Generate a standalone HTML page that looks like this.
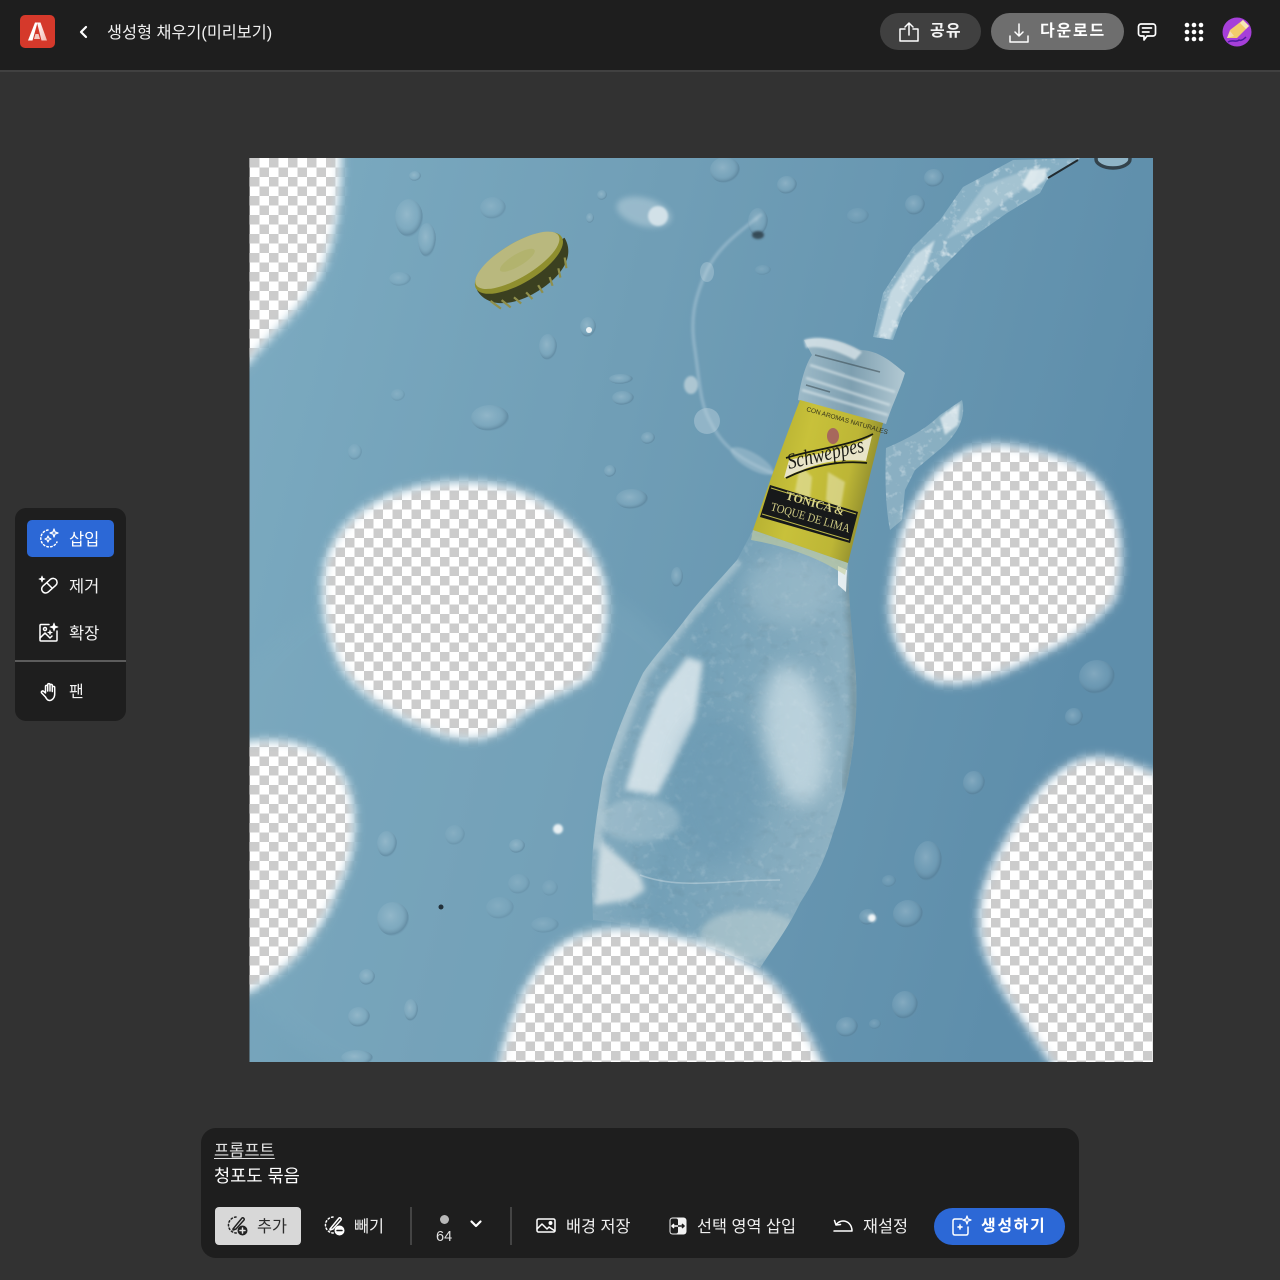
<!DOCTYPE html>
<html lang="ko">
<head>
<meta charset="utf-8">
<title>생성형 채우기(미리보기)</title>
<style>
html,body{margin:0;padding:0;width:1280px;height:1280px;overflow:hidden;background:#323232}
body{position:relative;font-family:"Liberation Sans","Noto Sans CJK KR",sans-serif;color:#f2f2f2}
.a{position:absolute;white-space:nowrap}
.t{position:absolute;white-space:nowrap;line-height:20px;font-size:15px}
svg.i{position:absolute;fill:none;stroke:#fff;stroke-width:1.5;stroke-linecap:round;stroke-linejoin:round;overflow:visible}
</style>
</head>
<body>

<svg class="a" style="left:0;top:0" width="1280" height="1280" viewBox="0 0 1280 1280">
<defs>
<pattern id="ck" x="250" y="158" width="19" height="19" patternUnits="userSpaceOnUse">
<rect width="19" height="19" fill="#fff"/><rect width="9.5" height="9.5" fill="#ccc"/><rect x="9.5" y="9.5" width="9.5" height="9.5" fill="#ccc"/>
</pattern>
<linearGradient id="bg" x1="0" y1="0" x2="1" y2="0.25">
<stop offset="0" stop-color="#7cabc1"/><stop offset=".45" stop-color="#709eb6"/><stop offset="1" stop-color="#5e8eab"/>
</linearGradient>
<filter id="b6" x="-20%" y="-20%" width="140%" height="140%"><feGaussianBlur stdDeviation="5"/></filter>
<filter id="b3" x="-30%" y="-30%" width="160%" height="160%"><feGaussianBlur stdDeviation="3"/></filter>
<filter id="b8" x="-50%" y="-50%" width="200%" height="200%"><feGaussianBlur stdDeviation="9"/></filter>
<filter id="b1" x="-30%" y="-30%" width="160%" height="160%"><feGaussianBlur stdDeviation="1"/></filter>
<filter id="tex" x="0" y="0" width="100%" height="100%">
<feTurbulence type="fractalNoise" baseFrequency=".12" numOctaves="3" seed="7"/>
<feColorMatrix values="0 0 0 0 1  0 0 0 0 1  0 0 0 0 1  2.6 0 0 0 -1.45"/>
<feComposite in2="SourceGraphic" operator="in"/>
</filter>
<filter id="tex2" x="0" y="0" width="100%" height="100%">
<feTurbulence type="fractalNoise" baseFrequency=".07 .1" numOctaves="3" seed="3"/>
<feColorMatrix values="0 0 0 0 .1  0 0 0 0 .18  0 0 0 0 .22  3 0 0 0 -1.75"/>
<feComposite in2="SourceGraphic" operator="in"/>
</filter>
<radialGradient id="dr" cx=".42" cy=".4" r=".62">
<stop offset="0" stop-color="#cfe0e8" stop-opacity=".32"/><stop offset=".6" stop-color="#9dbfd0" stop-opacity=".22"/><stop offset=".88" stop-color="#4f7289" stop-opacity=".42"/><stop offset="1" stop-color="#6e9ab2" stop-opacity=".08"/>
</radialGradient>
<linearGradient id="gl" x1="0" y1="0" x2="1" y2=".25">
<stop offset="0" stop-color="#93b5c6"/><stop offset=".45" stop-color="#73a0b7"/><stop offset="1" stop-color="#8fb2c3"/>
</linearGradient>
<linearGradient id="lb" x1="0" y1="0" x2="1" y2=".3">
<stop offset="0" stop-color="#a9a42c"/><stop offset=".45" stop-color="#c8c13a"/><stop offset=".8" stop-color="#bdb636"/><stop offset="1" stop-color="#8d8a2d"/>
</linearGradient>
<linearGradient id="nk" x1="0" y1="0" x2="1" y2="0">
<stop offset="0" stop-color="#9dbac8"/><stop offset=".5" stop-color="#7e9fb0"/><stop offset="1" stop-color="#b2c9d3"/>
</linearGradient>
<linearGradient id="adl" x1="0" y1="0" x2="1" y2="1"><stop offset="0" stop-color="#fff"/><stop offset="1" stop-color="#f3b9b0"/></linearGradient>
<clipPath id="img"><rect x="249.5" y="158" width="903.5" height="904"/></clipPath>
<clipPath id="str"><path d="M873,337 L883,293 L913,247 L940,220 L963,187 L1013,160 L1080,158 L1047,180 L1040,193 L1007,213 L973,237 L950,260 L923,287 L903,313 L893,340 Z"/></clipPath>
<clipPath id="bot"><path d="M753,530 L737,560 C715,585 700,600 687,617 C670,640 655,655 643,673 C625,710 612,745 603,777 C595,825 590,860 592,893 L593,920 C650,925 710,945 760,968 C775,945 790,925 800,903 C815,880 825,860 833,833 C845,800 852,765 855,727 C858,695 856,670 853,643 C851,620 849,600 848,563 Z"/></clipPath>
<mask id="holes" maskUnits="userSpaceOnUse" x="240" y="150" width="925" height="920">
<rect x="240" y="150" width="925" height="920" fill="#fff"/>
<g fill="#000" filter="url(#b6)">
<path id="h1" d="M230,140 L341,140 C343,190 338,240 318,280 C300,312 275,330 249,362 L230,380 Z"/>
<path id="h2" d="M322,590 C322,545 345,515 385,497 C420,482 465,476 510,487 C555,500 590,535 603,575 C613,610 605,650 590,678 C565,695 540,700 515,722 C490,745 455,745 415,725 C385,712 345,685 335,655 C325,630 322,610 322,590 Z"/>
<path id="h3" d="M889,600 C893,560 900,520 925,485 C945,455 975,440 1010,445 C1040,450 1085,458 1105,490 C1125,525 1125,570 1115,600 C1095,625 1065,645 1040,655 C1005,675 965,690 935,682 C905,672 888,640 889,600 Z"/>
<path id="h4" d="M230,745 C270,735 320,738 343,775 C360,805 358,850 340,885 C325,925 300,965 250,992 L230,1000 Z"/>
<path id="h5" d="M495,1080 C505,1030 520,985 548,955 C575,925 630,922 680,937 C720,945 760,965 780,990 C800,1015 815,1045 830,1080 Z"/>
<path id="h6" d="M1175,780 C1145,770 1115,752 1085,758 C1050,768 1025,805 1005,840 C985,875 973,905 982,945 C995,990 1030,1030 1062,1080 L1175,1080 Z"/>
</g>
</mask>
</defs>

<rect width="1280" height="1280" fill="#323232"/>
<g clip-path="url(#img)">
<rect x="249" y="158" width="905" height="905" fill="url(#ck)"/>
<g fill="none" stroke="#fff" stroke-width="7" opacity=".8" filter="url(#b3)">
<use href="#h1"/><use href="#h2"/><use href="#h3"/><use href="#h4"/><use href="#h5"/><use href="#h6"/>
</g>
<g mask="url(#holes)">
<rect x="249" y="158" width="905" height="905" fill="url(#bg)"/>
<ellipse cx="470" cy="830" rx="280" ry="270" fill="#7eaabf" opacity=".35" filter="url(#b8)"/>

<!-- thin splash -->
<path d="M762,214 C735,235 715,250 705,275 C694,300 690,320 695,350 C700,385 700,405 712,425 C725,450 745,462 775,474" fill="none" stroke="#c5dae4" stroke-width="3.5" stroke-opacity=".34" filter="url(#b1)"/>
<ellipse cx="758" cy="222" rx="10" ry="14" fill="url(#dr)"/><ellipse cx="758" cy="235" rx="6" ry="4" fill="#27343c" opacity=".75" filter="url(#b1)"/>
<ellipse cx="707" cy="272" rx="7" ry="10" fill="#c6d9e2" opacity=".35"/>
<ellipse cx="707" cy="421" rx="13" ry="13" fill="#bdd3de" opacity=".45"/>
<ellipse cx="691" cy="385" rx="7" ry="9" fill="#cfdde2" opacity=".65" filter="url(#b1)"/>
<ellipse cx="752" cy="461" rx="24" ry="8" transform="rotate(30 752 461)" fill="#b9d0db" opacity=".4" filter="url(#b1)"/>

<!-- stream -->
<path d="M873,337 L883,293 L913,247 L940,220 L963,187 L1013,160 L1080,158 L1047,180 L1040,193 L1007,213 L973,237 L950,260 L923,287 L903,313 L893,340 Z" fill="#9dc0d0" opacity=".62"/>
<g clip-path="url(#str)">
<rect x="870" y="155" width="215" height="190" fill="#fff" filter="url(#tex)" opacity=".7"/>
<path d="M878,335 L890,292 L915,255 L935,240 L925,270 L905,300 L890,340Z" fill="#eef5f7" opacity=".6" filter="url(#b1)"/>
<path d="M945,240 L985,185 L1040,165 L1035,180 L1000,205 L965,230Z" fill="#cfe0e7" opacity=".4" filter="url(#b1)"/>
</g>
<path d="M1030,170 L1047,168 L1045,180 L1030,192 L1022,185Z" fill="#e6eff2" opacity=".85" filter="url(#b1)"/>
<path d="M1048,178 L1078,160" stroke="#222b30" stroke-width="2" fill="none"/>
<ellipse cx="1113" cy="159" rx="17" ry="9" fill="#8fb4c6" stroke="#33434c" stroke-width="3.5"/>

<!-- right splash -->
<path d="M886,448 C905,440 925,430 940,415 L962,400 C966,415 960,430 945,445 L915,470 L905,490 L902,520 L890,530 C885,505 885,475 886,448 Z" fill="#bdd3dc" opacity=".42"/>
<path d="M886,448 C905,440 925,430 940,415 L962,400 C966,415 960,430 945,445 L915,470 L905,490 L902,520 L890,530 C885,505 885,475 886,448 Z" fill="#fff" filter="url(#tex)" opacity=".55"/>
<path d="M940,418 L960,403 L958,425 L945,435 Z" fill="#eef4f6" opacity=".7" filter="url(#b1)"/>

<!-- bottle body -->
<g clip-path="url(#bot)">
<rect x="580" y="525" width="290" height="455" fill="url(#gl)"/>
<rect x="580" y="525" width="290" height="455" fill="#fff" filter="url(#tex)" opacity=".16"/>
<rect x="580" y="525" width="290" height="455" fill="#000" filter="url(#tex2)" opacity=".14"/>
<path d="M687,657 L703,662 L695,720 L672,767 L657,795 L625,790 L640,740 L660,693 Z" fill="#e6eff2" opacity=".78" filter="url(#b3)"/>
<ellipse cx="795" cy="735" rx="32" ry="70" transform="rotate(-8 795 735)" fill="#d6e5eb" opacity=".65" filter="url(#b8)"/>
<ellipse cx="720" cy="790" rx="45" ry="75" fill="#6c9ab3" opacity=".6" filter="url(#b8)"/>
<ellipse cx="790" cy="590" rx="45" ry="35" fill="#a9c5d1" opacity=".45" filter="url(#b8)"/>
<path d="M600,840 L640,875 L645,890 L630,900 L595,905 Z" fill="#e7eeef" opacity=".72" filter="url(#b3)"/>
<path d="M640,875 C680,890 720,880 780,880" fill="none" stroke="#dbe7eb" stroke-width="1.5" opacity=".4"/>
<ellipse cx="640" cy="820" rx="40" ry="22" fill="#cfdfe4" opacity=".3" filter="url(#b3)"/>
<ellipse cx="750" cy="935" rx="50" ry="25" fill="#bfd1d4" opacity=".55" filter="url(#b3)"/>
<path d="M737,560 L687,617 L643,673 L603,777 L595,850" fill="none" stroke="#c8d9df" stroke-width="12" opacity=".5" filter="url(#b3)"/>
<path d="M848,575 L853,643 L855,727 L845,790" fill="none" stroke="#5a7379" stroke-width="7" opacity=".45" filter="url(#b3)"/>
<path d="M838,566 L847,570 L846,592 L838,585 Z" fill="#eef4f6" opacity=".9"/>
</g>

<!-- neck -->
<path d="M804,340 C830,335 850,345 860,350 C880,350 895,365 905,373 C900,390 892,405 886,424 L798,400 C800,385 805,365 812,355 Z" fill="url(#nk)"/>
<path d="M804,340 C815,335 840,338 862,352 L855,360 C835,350 820,345 806,348 Z" fill="#dfe9ed" opacity=".75" filter="url(#b1)"/>
<path d="M810,365 L895,392 M806,378 L890,405 M802,390 L888,415" stroke="#e2ecef" stroke-width="2.5" opacity=".6" fill="none" filter="url(#b1)"/>
<path d="M815,355 L880,372 M806,385 L830,392" stroke="#2f3d44" stroke-width="1.5" opacity=".5" fill="none"/>

<!-- label -->
<path d="M800,400 L883,423 L848,563 L753,530 C760,510 775,465 800,400 Z" fill="url(#lb)"/>
<path d="M800,465 L812,477 L810,499 L795,492Z M828,472 L845,482 L840,512 L826,500Z" fill="#e8e6b8" opacity=".55" filter="url(#b1)"/>
<path d="M789,460 C810,455 850,450 872,436 L866,461 C840,458 815,462 784,478 Z" fill="#e8e4c8"/>
<path d="M786,458 C810,450 850,446 873,434" stroke="#181a10" stroke-width="1.8" fill="none"/>
<path d="M786,478 C810,466 840,460 867,463" stroke="#181a10" stroke-width="1.8" fill="none"/>
<ellipse cx="833" cy="436" rx="6" ry="8" fill="#a7685c"/>
<text x="789" y="469" font-family="'Liberation Serif',serif" font-style="italic" font-size="22" fill="#1b1c16" transform="rotate(-13 789 469)" textLength="78" lengthAdjust="spacingAndGlyphs">Schweppes</text>
<text x="806" y="411" font-family="'Liberation Sans',sans-serif" font-size="6.5" fill="#33321a" transform="rotate(16 806 411)">CON AROMAS NATURALES</text>
<path d="M770,485 L858,512 L850,543 L760,517 Z" fill="#17191a"/>
<path d="M771,488 L856,514 M762,514 L849,540" stroke="#bdb84a" stroke-width="1"/>
<text x="785" y="499" font-family="'Liberation Serif',serif" font-weight="bold" font-size="12" fill="#d9d48a" transform="rotate(16 785 499)">TÓNICA &amp;</text>
<text x="770" y="510" font-family="'Liberation Serif',serif" font-size="12" fill="#cfcb84" transform="rotate(16 770 510)" textLength="82" lengthAdjust="spacingAndGlyphs">TOQUE DE LIMA</text>
<path d="M753,530 L848,563 L845,575 C815,555 780,545 751,540 Z" fill="#c6cf9e" opacity=".6"/>

<!-- cap -->
<g transform="rotate(-31 522 268)">
<path d="M472,264 C472,282 490,296 522,296 C554,296 574,284 574,264 Z" fill="#3b4020"/>
<path d="M478,280 l5,12 M488,285 l4,11 M500,289 l3,9 M513,291 l2,9 M527,291 l0,9 M541,290 l-2,9 M553,287 l-3,9 M564,281 l-4,10" stroke="#8f8f4c" stroke-width="2.2"/>
<ellipse cx="522" cy="262" rx="50" ry="20" fill="#8f8f2e"/>
<ellipse cx="522" cy="259" rx="48" ry="17" fill="#b9b87e"/>
<ellipse cx="522" cy="259" rx="20" ry="6" fill="#b0b16a" opacity=".8"/>
</g>

<!-- drops -->
<g fill="url(#dr)">
<ellipse cx="409" cy="218" rx="14" ry="19"/><ellipse cx="427" cy="240" rx="9" ry="17"/>
<ellipse cx="493" cy="208" rx="13" ry="11" opacity=".7"/><ellipse cx="400" cy="279" rx="11" ry="7" opacity=".7"/>
<ellipse cx="787" cy="185" rx="10" ry="9"/><ellipse cx="725" cy="170" rx="15" ry="13"/>
<ellipse cx="934" cy="178" rx="10" ry="9"/><ellipse cx="915" cy="205" rx="10" ry="10"/>
<ellipse cx="548" cy="347" rx="9" ry="13"/><ellipse cx="588" cy="327" rx="8" ry="10"/>
<ellipse cx="621" cy="379" rx="12" ry="5"/><ellipse cx="623" cy="398" rx="11" ry="7"/>
<ellipse cx="490" cy="418" rx="19" ry="13"/><ellipse cx="648" cy="438" rx="7" ry="6"/>
<ellipse cx="610" cy="471" rx="6" ry="6"/><ellipse cx="632" cy="499" rx="16" ry="10"/>
<ellipse cx="677" cy="577" rx="6" ry="10"/><ellipse cx="398" cy="395" rx="7" ry="6" opacity=".6"/>
<ellipse cx="355" cy="452" rx="7" ry="8" opacity=".7"/>
<ellipse cx="1097" cy="677" rx="18" ry="17"/><ellipse cx="1074" cy="717" rx="9" ry="9"/>
<ellipse cx="974" cy="783" rx="11" ry="12"/><ellipse cx="928" cy="861" rx="14" ry="20"/>
<ellipse cx="908" cy="914" rx="15" ry="14"/><ellipse cx="868" cy="917" rx="9" ry="8"/>
<ellipse cx="889" cy="881" rx="7" ry="6" opacity=".7"/>
<ellipse cx="387" cy="844" rx="10" ry="13"/><ellipse cx="393" cy="919" rx="16" ry="17"/>
<ellipse cx="455" cy="835" rx="10" ry="10" opacity=".6"/><ellipse cx="517" cy="846" rx="8" ry="7"/>
<ellipse cx="519" cy="884" rx="11" ry="10" opacity=".6"/><ellipse cx="545" cy="925" rx="14" ry="8" opacity=".6"/>
<ellipse cx="500" cy="908" rx="14" ry="11" opacity=".55"/><ellipse cx="550" cy="888" rx="8" ry="8" opacity=".5"/>
<ellipse cx="367" cy="977" rx="8" ry="8"/><ellipse cx="359" cy="1017" rx="11" ry="10"/>
<ellipse cx="411" cy="1010" rx="7" ry="11"/><ellipse cx="905" cy="1005" rx="13" ry="14"/>
<ellipse cx="847" cy="1027" rx="11" ry="10"/><ellipse cx="357" cy="1058" rx="16" ry="8"/>
<ellipse cx="875" cy="1024" rx="6" ry="5" opacity=".7"/><ellipse cx="763" cy="270" rx="8" ry="5" opacity=".6"/>
<ellipse cx="858" cy="216" rx="11" ry="8" opacity=".6"/><ellipse cx="602" cy="195" rx="5" ry="5"/>
<ellipse cx="590" cy="218" rx="4" ry="5"/><ellipse cx="415" cy="176" rx="6" ry="5"/>
</g>
<ellipse cx="644" cy="212" rx="28" ry="14" transform="rotate(15 644 212)" fill="#b8d0dc" opacity=".55" filter="url(#b3)"/>
<ellipse cx="658" cy="216" rx="10" ry="10" fill="#e6eff3" opacity=".75" filter="url(#b1)"/>
<circle cx="558" cy="829" r="5" fill="#e8f0f3" filter="url(#b1)"/>
<circle cx="872" cy="918" r="4" fill="#f1f6f8" filter="url(#b1)"/>
<circle cx="441" cy="907" r="2.5" fill="#22303a"/><circle cx="589" cy="330" r="3" fill="#e9f1f4"/>
</g>
</g>
</svg>

<!-- header -->
<div class="a" style="left:0;top:0;width:1280px;height:70px;background:#1e1e1e;border-bottom:2px solid #414141"></div>
<div class="a" style="left:20px;top:15px;width:35px;height:33px;border-radius:5px;background:#d5392b"></div>
<svg class="a" style="left:27px;top:21px" width="21" height="21" viewBox="0 0 21 21"><path d="M8,1.5 L10.5,1.5 L5.5,19.5 L1,19.5 Z" fill="#fff"/><path d="M10,1.5 L13.5,1.5 L20,19.5 L14.5,19.5 Z" fill="url(#adl)"/><path d="M8.5,13 L11.5,13 L13,18 L7,18 Z" fill="#f4c5be"/></svg>
<svg class="i" style="left:78px;top:25px;stroke-width:2.2" width="12" height="14" viewBox="0 0 12 14"><path d="M8,2 L3,7 L8,12"/></svg>
<div class="t" style="left:107px;top:22px;font-size:16.3px;line-height:22px;color:#f0f0f0">생성형 채우기(미리보기)</div>

<div class="a" style="left:880px;top:13px;width:101px;height:37px;border-radius:19px;background:#404040"></div>
<svg class="i" style="left:898px;top:21px" width="22" height="22" viewBox="0 0 22 22"><path d="M7,8 H2 V20 H20 V8 H15"/><path d="M11,14 V2 M7,6 L11,2 L15,6"/></svg>
<div class="t" style="left:930px;top:22px;font-size:16px;font-weight:700;letter-spacing:1.2px;color:#f4f4f4">공유</div>

<div class="a" style="left:991px;top:13px;width:133px;height:37px;border-radius:19px;background:#6e6e6e"></div>
<svg class="i" style="left:1008px;top:22px" width="22" height="22" viewBox="0 0 22 22"><path d="M2,14 V20 H20 V14"/><path d="M11,2 V14 M7,10 L11,14 L15,10"/></svg>
<div class="t" style="left:1040px;top:22px;font-size:16px;font-weight:700;letter-spacing:1.8px;color:#fff">다운로드</div>

<svg class="i" style="left:1137px;top:22px;stroke-width:1.7" width="20" height="20" viewBox="0 0 20 20"><path d="M4,2 H16 A2.5,2.5 0 0 1 18.5,4.5 V11.5 A2.5,2.5 0 0 1 16,14 H10 L7,18 V14 H4 A2.5,2.5 0 0 1 1.5,11.5 V4.5 A2.5,2.5 0 0 1 4,2Z"/><path d="M5.5,6 H14.5 M5.5,10 H12"/></svg>
<svg class="a" style="left:1184px;top:22px" width="20" height="20" viewBox="0 0 20 20" fill="#fff"><circle cx="3" cy="3" r="2.3"/><circle cx="10" cy="3" r="2.3"/><circle cx="17" cy="3" r="2.3"/><circle cx="3" cy="10" r="2.3"/><circle cx="10" cy="10" r="2.3"/><circle cx="17" cy="10" r="2.3"/><circle cx="3" cy="17" r="2.3"/><circle cx="10" cy="17" r="2.3"/><circle cx="17" cy="17" r="2.3"/></svg>
<svg class="a" style="left:1222px;top:17px" width="30" height="30" viewBox="0 0 30 30"><circle cx="15" cy="15" r="14.5" fill="#a63fd9"/><path d="M5,21 L8,13 L21,3 L27,9 L15,21 Z" fill="#f2cd6b"/><path d="M21,3 L27,9 L24,12 L18,6Z" fill="#f6e7b8"/><path d="M5,21 L8,14 L12,19 Z" fill="#f5ddb0"/><path d="M6,25 C11,22 14,26 17,23 C19,24 21,23 24,20" fill="none" stroke="#4b1aa0" stroke-width="1.5"/></svg>

<!-- left toolbar -->
<div class="a" style="left:15px;top:508px;width:111px;height:213px;border-radius:11px;background:#1e1e1e"></div>
<div class="a" style="left:27px;top:520px;width:87px;height:37px;border-radius:5px;background:#2c68d6"></div>
<div class="a" style="left:15px;top:660px;width:111px;height:2px;background:#5c5c5c"></div>

<svg class="i" style="left:39px;top:528px;stroke-width:1.5" width="22" height="22" viewBox="0 0 22 22"><path d="M9,2 A8.5,8.5 0 1 0 18,14" stroke-dasharray="1.5 2.3"/><path d="M15,1 L16,4 L19,5 L16,6 L15,9 L14,6 L11,5 L14,4Z" stroke-width="1.2"/><path d="M9,8 L9.8,10 L12,11 L9.8,12 L9,14 L8.2,12 L6,11 L8.2,10Z" stroke-width="1.2"/></svg>
<div class="t" style="left:69px;top:530px;font-size:16.5px;color:#fff">삽입</div>

<svg class="i" style="left:39px;top:575px;stroke-width:1.5" width="20" height="20" viewBox="0 0 20 20"><rect x="1.5" y="7" width="18" height="8" rx="4" transform="rotate(-42 10 11)"/><path d="M8,8 L13,13"/><path d="M3,1 L3.8,3.2 L6,4 L3.8,4.8 L3,7 L2.2,4.8 L0,4 L2.2,3.2Z" fill="#fff" stroke-width=".8"/></svg>
<div class="t" style="left:69px;top:577px;font-size:16.5px;color:#f2f2f2">제거</div>

<svg class="i" style="left:39px;top:622px;stroke-width:1.5" width="21" height="21" viewBox="0 0 21 21"><path d="M10,2.5 H2 Q1,2.5 1,3.500 V18 Q1,19 2,19 H17 Q18,19 18,18 V9"/><path d="M1,16 L6,11 L11,16 L13,14"/><circle cx="6" cy="7" r="1.5"/><path d="M15,1 L16,4 L19,5 L16,6 L15,9 L14,6 L11,5 L14,4Z" fill="#fff" stroke-width=".8"/><path d="M11,8 L11.7,9.8 L13.5,10.5 L11.7,11.2 L11,13 L10.3,11.2 L8.5,10.5 L10.3,9.8Z" fill="#fff" stroke-width=".5"/></svg>
<div class="t" style="left:69px;top:624px;font-size:16.5px;color:#f2f2f2">확장</div>

<svg class="i" style="left:40px;top:682px;stroke-width:1.5" width="20" height="20" viewBox="0 0 20 20"><path d="M5.5,15 L1.7,11 C.7,9.7 2.4,8.3 3.6,9.3 L5.5,11 V4.5 C5.5,3 7.7,3 7.7,4.5 V9 V2.8 C7.7,1.3 10,1.3 10,2.8 V9 V3.5 C10,2 12.3,2 12.3,3.5 V9.5 V5.5 C12.3,4 14.7,4 14.7,5.5 V12 C14.7,16 12,18.5 9.5,18.5 C7.8,18.5 6.5,17 5.5,15Z"/></svg>
<div class="t" style="left:69px;top:683px;font-size:16px;color:#f2f2f2">팬</div>

<!-- prompt bar -->
<div class="a" style="left:201px;top:1128px;width:878px;height:130px;border-radius:15px;background:#1e1e1e"></div>
<div class="t" style="left:214px;top:1141px;font-size:16.5px;color:#e2e2e2;text-decoration:underline;text-underline-offset:2px">프롬프트</div>
<div class="t" style="left:214px;top:1166px;font-size:17.6px;color:#fff">청포도 묶음</div>

<div class="a" style="left:215px;top:1207px;width:86px;height:38px;border-radius:4px;background:#d8d8d8"></div>
<svg class="i" style="left:227px;top:1215px;stroke:#222" width="22" height="22" viewBox="0 0 22 22"><path d="M9,2 A8,8 0 1 0 10,18" stroke-dasharray="1.5 2.3"/><path d="M6,14 L15,3 C16,2 18,4 17,5 L9,14 L6,15Z"/><circle cx="15.5" cy="15.5" r="5" fill="#222" stroke="none"/><path d="M15.5,13 V18 M13,15.5 H18" stroke="#e4e4e4"/></svg>
<div class="t" style="left:257px;top:1217px;font-size:16.3px;color:#2c2c2c">추가</div>

<svg class="i" style="left:324px;top:1215px" width="22" height="22" viewBox="0 0 22 22"><path d="M9,2 A8,8 0 1 0 10,18" stroke-dasharray="1.5 2.3"/><path d="M6,14 L15,3 C16,2 18,4 17,5 L9,14 L6,15Z"/><circle cx="15.5" cy="15.5" r="5" fill="#fff" stroke="none"/><path d="M13,15.5 H18" stroke="#1e1e1e"/></svg>
<div class="t" style="left:354px;top:1217px;font-size:16.3px;color:#f0f0f0">빼기</div>

<div class="a" style="left:410px;top:1207px;width:2px;height:38px;background:#444"></div>
<div class="a" style="left:440px;top:1215px;width:9px;height:9px;border-radius:50%;background:#b8b8b8"></div>
<div class="t" style="left:436px;top:1227px;font-size:14.5px;color:#e2e2e2">64</div>
<svg class="i" style="left:470px;top:1219px;stroke-width:2.2" width="12" height="10" viewBox="0 0 12 10"><path d="M1.5,2.5 L6,7 L10.5,2.5"/></svg>
<div class="a" style="left:510px;top:1207px;width:2px;height:38px;background:#444"></div>

<svg class="i" style="left:536px;top:1217px;stroke-width:1.5" width="20" height="18" viewBox="0 0 20 18"><rect x="1" y="2" width="18" height="13" rx="1.5"/><path d="M1,12 L6,7 L11,12 L13,10 L19,14"/><circle cx="14.5" cy="6" r="1.2" fill="#fff"/></svg>
<div class="t" style="left:566px;top:1217px;font-size:16.3px;color:#f0f0f0">배경 저장</div>

<svg class="a" style="left:669px;top:1217px" width="18" height="18" viewBox="0 0 18 18"><rect x=".5" y=".5" width="17" height="17" rx="3" fill="#f2f2f2"/><rect x="1.5" y="1.5" width="7.5" height="15" rx="2" fill="#1e1e1e"/><path d="M3,9 H9 M5,7 L3,9 L5,11" fill="none" stroke="#fff" stroke-width="1.5"/><path d="M9,9 H15 M13,7 L15,9 L13,11" fill="none" stroke="#1e1e1e" stroke-width="1.5"/></svg>
<div class="t" style="left:697px;top:1217px;font-size:16.3px;color:#f0f0f0">선택 영역 삽입</div>

<svg class="i" style="left:833px;top:1218px" width="20" height="16" viewBox="0 0 20 16"><path d="M1,13 H19 C19,7 15,3 10,3 C7,3 5,4.5 3.5,6"/><path d="M1.5,2.5 L3,7 L7.5,6.5"/></svg>
<div class="t" style="left:863px;top:1217px;font-size:16.3px;color:#f0f0f0">재설정</div>

<div class="a" style="left:934px;top:1208px;width:131px;height:37px;border-radius:19px;background:#2c68d6"></div>
<svg class="i" style="left:952px;top:1216px" width="20" height="20" viewBox="0 0 20 20"><path d="M10,3 H3 Q1,3 1,5 V17 Q1,19 3,19 H14 Q16,19 16,17 V11"/><path d="M15,0 L16,3 L19,4 L16,5 L15,8 L14,5 L11,4 L14,3Z" stroke-width="1.2"/><path d="M8,8 L8.8,10.2 L11,11 L8.8,11.8 L8,14 L7.2,11.8 L5,11 L7.2,10.2Z" fill="#fff" stroke-width=".5"/></svg>
<div class="t" style="left:981px;top:1217px;font-size:16px;font-weight:700;letter-spacing:1.6px;color:#fff">생성하기</div>

</body>
</html>
